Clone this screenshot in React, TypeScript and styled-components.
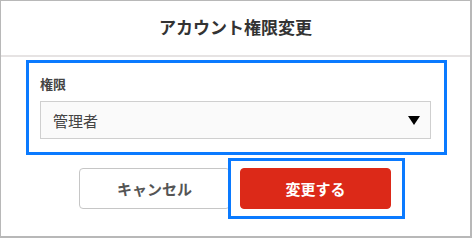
import React from "react";
import styled, { createGlobalStyle } from "styled-components";

const Global = createGlobalStyle`
  html, body { margin: 0; padding: 0; background: #fff; }
  body { font-family: "Noto Sans CJK JP", "Noto Sans", sans-serif; }
  * { box-sizing: border-box; }
`;

const Dialog = styled.div`
  width: 472px;
  height: 238px;
  background: #fff;
  border-style: solid;
  border-color: #b8b8b8;
  border-width: 1px 2px 2px 1px;
  display: flex;
  flex-direction: column;
`;

const Header = styled.div`
  height: 56px;
  display: flex;
  align-items: center;
  justify-content: center;
  border-bottom: 2px solid #e6e3e3;
  padding-bottom: 3px;
`;

const Title = styled.h1`
  margin: 0;
  font-size: 17px;
  font-weight: 700;
  color: #333;
  line-height: 20px;
`;

const Body = styled.div`
  display: flex;
  flex-direction: column;
  padding-top: 3px;
`;

const FieldGroup = styled.div`
  width: 421px;
  margin-left: 25px;
  border: 3px solid #0a7aff;
  padding: 13px 13px 13px 11px;
  display: flex;
  flex-direction: column;
  gap: 9px;
`;

const Label = styled.label`
  font-size: 13px;
  line-height: 16px;
  font-weight: 700;
  color: #444;
`;

const Select = styled.div`
  height: 38px;
  width: 391px;
  background: #fafafa;
  border: 1px solid #cfcfcf;
  display: flex;
  align-items: center;
  justify-content: space-between;
  padding: 0 10px 0 12px;
  font-size: 15px;
  color: #444;
`;

const Actions = styled.div`
  display: flex;
  justify-content: center;
  gap: 10px;
  margin-top: 13px;
  padding-right: 1px;
`;

const Button = styled.button<{ $primary?: boolean }>`
  position: relative;
  width: 151px;
  height: 41px;
  border-radius: 4px;
  font-family: inherit;
  font-size: 15px;
  font-weight: 700;
  cursor: pointer;
  border: 1px solid ${(p) => (p.$primary ? "#dc2918" : "#c6c6c6")};
  background: ${(p) => (p.$primary ? "#dc2918" : "#fff")};
  color: ${(p) => (p.$primary ? "#fff" : "#555")};
`;

const Highlight = styled.span`
  position: absolute;
  left: -13px;
  right: -15px;
  top: -11px;
  bottom: -11px;
  border: 3px solid #0a7aff;
  pointer-events: none;
`;

export default function App() {
  return (
    <>
      <Global />
      <Dialog>
        <Header>
          <Title>アカウント権限変更</Title>
        </Header>
        <Body>
          <FieldGroup>
            <Label>権限</Label>
            <Select>
              <span>管理者</span>
              <svg width="12" height="9" viewBox="0 0 12 9">
                <polygon points="0,0 12,0 6,9" fill="#000" />
              </svg>
            </Select>
          </FieldGroup>
          <Actions>
            <Button>キャンセル</Button>
            <Button $primary>
              変更する
              <Highlight />
            </Button>
          </Actions>
        </Body>
      </Dialog>
    </>
  );
}
